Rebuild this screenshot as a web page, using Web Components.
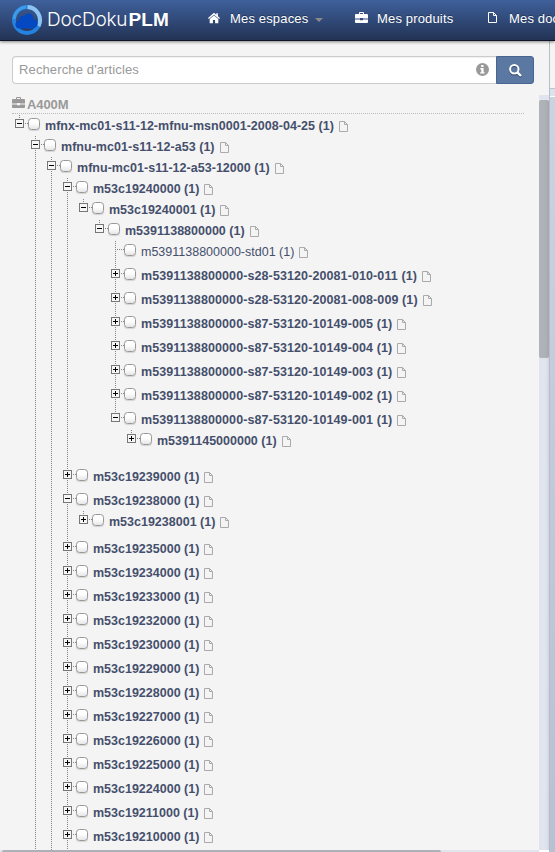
<!DOCTYPE html>
<html lang="fr">
<head>
<meta charset="utf-8">
<title>DocDokuPLM</title>
<style>
html,body{margin:0;height:100%;overflow:hidden}
body{font-family:"Liberation Sans",Arial,sans-serif;background:#f4f4f4}
</style>
</head>
<body>
<plm-app></plm-app>
<script>
const define = (name, html, init) => customElements.define(name, class extends HTMLElement {
  constructor() { super(); this.attachShadow({mode: 'open'}); }
  connectedCallback() {
    if (this.shadowRoot.childNodes.length) return;
    const t = document.createElement('template');
    t.innerHTML = html;
    this.shadowRoot.append(t.content.cloneNode(true));
    if (init) init(this, this.shadowRoot);
  }
});

const icons = {
  home: '<svg width="14" height="12" viewBox="0 0 14 12"><path fill="currentColor" d="M7 .8L1 6l.8.9L7 2.700l5.200 4.200.8-.9-2.100-1.800V1.300H9.300v1.500zM2.700 7v4.300h3.200V8h2.200v3.300h3.200V7L7 3.500z"/></svg>',
  briefcase: '<svg width="13" height="12" viewBox="0 0 13 12"><path fill="currentColor" fill-rule="evenodd" d="M4 2V1q0-1 1-1h3q1 0 1 1v1h3q1 0 1 1v3.600H8V6H5v.6H0V3q0-1 1-1zm1 0h3V1H5zM0 7.400h5v.8h3v-.8h5V10q0 1-1 1H1q-1 0-1-1z"/></svg>',
  file: '<svg width="9" height="11" viewBox="0 0 9 11"><path fill="none" stroke="currentColor" d="M.5.5H5.500L8.500 3.500v7H.5zM5.500.5V3.500h3"/></svg>',
  info: '<svg width="13" height="13" viewBox="0 0 13 13"><circle cx="6.500" cy="6.500" r="6.500" fill="#999"/><path fill="#fff" d="M5.200 2h2.300v2H5.200zM4.300 5h3.300v4.200h1v1.400H4.200V9.200h1.100V6.400h-1z"/></svg>',
  search: '<svg width="13" height="13" viewBox="0 0 13 13"><g fill="none" stroke="#fff" stroke-width="2"><circle cx="5.300" cy="5.300" r="4.200"/><path d="M8.300 8.300l3.700 3.700" stroke-width="2.400"/></g></svg>'
};

define('plm-icon', '<style>:host{display:block;flex:none}svg{display:block}</style>',
  (el, root) => root.lastChild.insertAdjacentHTML('afterend', icons[el.getAttribute('name')]));

define('plm-logo', `<style>
:host{display:flex;align-items:center;color:#fff;width:180px;height:40px;flex:none}
svg{display:block;margin:-1px 4px 0 11px;flex:none}
span{font:300 19px/22px Inter,"Liberation Sans",sans-serif;letter-spacing:-.2px;white-space:nowrap;width:81.500px;flex:none}
b{font:bold 19px/22px "Liberation Sans",sans-serif;letter-spacing:.1px}
</style>
<svg width="32" height="32" viewBox="0 0 32 32">
<circle cx="16" cy="16" r="13" fill="none" stroke="#2583df" stroke-width="4"/>
<path d="M16.500 3a13 13 0 0 1 11 19" fill="none" stroke="#8fc3f2" stroke-width="4"/>
<path d="M3.100 15A13 13 0 0 1 15 3" fill="none" stroke="#3d9bea" stroke-width="3"/>
<g fill="#0549c2"><circle cx="8.500" cy="20.500" r="4"/><circle cx="12" cy="15.800" r="4"/><circle cx="17.500" cy="14.200" r="4.800"/><circle cx="22.500" cy="19.500" r="4.300"/><path d="M8.500 16h14v8.500h-14z"/></g>
</svg><span>DocDoku</span><b>PLM</b>`);

define('plm-nav-item', `<style>
:host{display:flex;align-items:center;color:#fff;font-size:13px;line-height:16px;letter-spacing:.16px;white-space:nowrap;text-shadow:0 -1px 0 #0005}
</style><slot></slot>`);

define('plm-navbar', `<style>
:host{display:flex;height:40px;width:555px;overflow:hidden;background:linear-gradient(#3e609b,#233355);border-bottom:1px solid #101527;box-shadow:0 1px 3px #0007;position:relative}
nav{display:flex;height:37px;align-items:center;margin-left:27px;flex:none}
plm-nav-item{flex:none}
.a{width:147px}.b{width:132px}
.t{margin-left:9px}.caret{border:4px solid transparent;border-top-color:#8a8a8a;border-bottom:0;margin:3px 0 0 7px}
plm-icon{margin-top:-2px}
</style>
<plm-logo></plm-logo>
<nav>
<plm-nav-item class="a"><plm-icon name="home"></plm-icon><span class="t">Mes espaces</span><i class="caret"></i></plm-nav-item>
<plm-nav-item class="b"><plm-icon name="briefcase" style="margin-left:1px"></plm-icon><span class="t">Mes produits</span></plm-nav-item>
<plm-nav-item><plm-icon name="file" style="margin-left:2px"></plm-icon><span class="t" style="margin-left:12px">Mes documents</span></plm-nav-item>
</nav>`);

define('plm-search', `<style>
:host{display:flex;width:522px;height:28px;box-sizing:border-box}
.f{flex:1;display:flex;align-items:center;justify-content:space-between;box-sizing:border-box;border:1px solid #ccc;border-right:0;border-radius:4px 0 0 4px;background:#fff;color:#999;font-size:13px;letter-spacing:.13px;padding:0 7px 1px 6px;box-shadow:inset 0 1px 1px #00000010}
.b{width:38px;box-sizing:border-box;border:1px solid #486591;border-radius:0 3px 3px 0;background:#5b78a2;display:flex;align-items:center;justify-content:center}
.b plm-icon{filter:drop-shadow(0 1px 0 #2c4266)}
</style><div class="f"><span>Recherche d'articles</span><plm-icon name="info"></plm-icon></div><div class="b"><plm-icon name="search"></plm-icon></div>`);

define('plm-node', `<style>
:host{display:block;padding-bottom:3px;background:repeating-linear-gradient(#858585 0 1px,transparent 1px 2px) 4px 0/1px 100% no-repeat}
:host([last]){background-size:1px 5px}
.row{display:flex;height:21px;white-space:nowrap;color:#454f6c;font-weight:bold;font-size:12.500px;line-height:15px}
:host([leaf]) .row{font-weight:normal}
.tg{flex:none;box-sizing:border-box;width:9px;height:9px;margin-top:4px;border:1px solid #777;background:linear-gradient(#000,#000) 1px 3px/5px 1px no-repeat,#f6f6f6}
.tg.plus{background:linear-gradient(#000,#000) 1px 3px/5px 1px no-repeat,linear-gradient(#000,#000) 3px 1px/1px 5px no-repeat,#f6f6f6}
:host([leaf]) .tg{border:0;background:repeating-linear-gradient(90deg,#858585 0 1px,transparent 1px 2px) 4px 4px/5px 1px no-repeat}
.dots{flex:none;width:4px;height:1px;margin-top:8px;background:repeating-linear-gradient(90deg,transparent 0 1px,#858585 1px 2px)}
.cb{flex:none;box-sizing:border-box;width:12px;height:12px;margin-top:3px;border:1px solid #989898;border-radius:3.500px;background:linear-gradient(#fff 40%,#e6e6e6);box-shadow:0 1px 1px #0002}
.t{margin:4px 5px 0 5px}
plm-icon{color:#aaa;margin-top:6px}
.kids{padding-left:16px}
</style><div class="row"><i class="tg"></i><i class="dots"></i><i class="cb"></i><span class="t"></span><plm-icon name="file"></plm-icon></div><div class="kids"><slot></slot></div>`,
(el, root) => {
  const label = el.getAttribute('label'), text = root.querySelector('.t');
  text.textContent = label + ' (1)';
  if (!el.hasAttribute('open')) root.querySelector('.tg').classList.add('plus');
  const dashes = label.split('-').length - 1;
  text.style.letterSpacing = el.hasAttribute('leaf') ? '0' : dashes === 0 ? '0' : label.startsWith('mf') ? '.03px' : '.1px';
});

const leaf = (l, a = '') => `<plm-node label="${l}" ${a}></plm-node>`;
const group = (l, a, kids) => `<plm-node label="${l}" open ${a}>${kids}</plm-node>`;
const p = 'm5391138800000-';
const tree =
group('mfnx-mc01-s11-12-mfnu-msn0001-2008-04-25', 'last',
 group('mfnu-mc01-s11-12-a53', '',
  group('mfnu-mc01-s11-12-a53-12000', '',
   group('m53c19240000', '',
    group('m53c19240001', 'last',
     group('m5391138800000', 'last',
      leaf(p + 'std01', 'leaf') +
      ['s28-53120-20081-010-011', 's28-53120-20081-008-009', 's87-53120-10149-005', 's87-53120-10149-004', 's87-53120-10149-003', 's87-53120-10149-002'].map(s => leaf(p + s)).join('') +
      group(p + 's87-53120-10149-001', 'last', leaf('m5391145000000', 'last'))))) +
   leaf('m53c19239000') +
   group('m53c19238000', '', leaf('m53c19238001', 'last')) +
   [235, 234, 233, 232, 230, 229, 228, 227, 226, 225, 224, 211, 210].map(n => leaf('m53c19' + n + '000')).join(''))));

define('plm-tree', `<style>
:host{display:block;overflow:hidden;height:735px;padding-left:3px}
</style>${tree}`);

define('plm-app', `<style>
:host{display:grid;grid-template:41px 809px 2px/539px 10px 6px;width:555px;height:852px;background:#f4f4f4}
plm-navbar{grid-column:1/4;z-index:1}
main{padding:15px 0 0 12px;overflow:hidden}
h3{display:flex;align-items:center;gap:2px;box-sizing:border-box;width:512px;height:20px;margin:10px 0 1px;padding-top:2px;border-bottom:1px dotted #bbb;color:#999;font:bold 13px/16px "Liberation Sans",sans-serif;letter-spacing:-.1px}
h3 plm-icon{margin-top:-4px}
.v{margin-top:54px;background:linear-gradient(#dfe4ef 5px,transparent 5px),linear-gradient(90deg,#e0e4ee 7px,#cfd4de)}
.v i{display:block;height:258px;margin-top:5px;border-radius:2px;background:linear-gradient(90deg,#b0b3b8,#adb1b6 7px,#a3a7ad)}
.r{grid-row:2/4;grid-column:3;border-left:1px solid #b9bdc5;background:linear-gradient(#f4f4f4 47px,#bcc3d0 47px 48px,#dce2ec 48px 55px,#fff 55px 56px,#cad3e2 56px,#b5c1d5)}
.h{grid-row:3;background:#dfe4ef}
.h i{display:block;height:2px;width:439px;margin-left:2px;border-radius:2px 2px 0 0;background:#adb1b5}
.c{grid-row:3;grid-column:2;background:#fff}
</style>
<plm-navbar></plm-navbar>
<main><plm-search></plm-search><h3><plm-icon name="briefcase"></plm-icon>A400M</h3><plm-tree></plm-tree></main>
<div class="v"><i></i></div><div class="r"></div>
<div class="h"><i></i></div><div class="c"></div>`);
</script>
</body>
</html>
